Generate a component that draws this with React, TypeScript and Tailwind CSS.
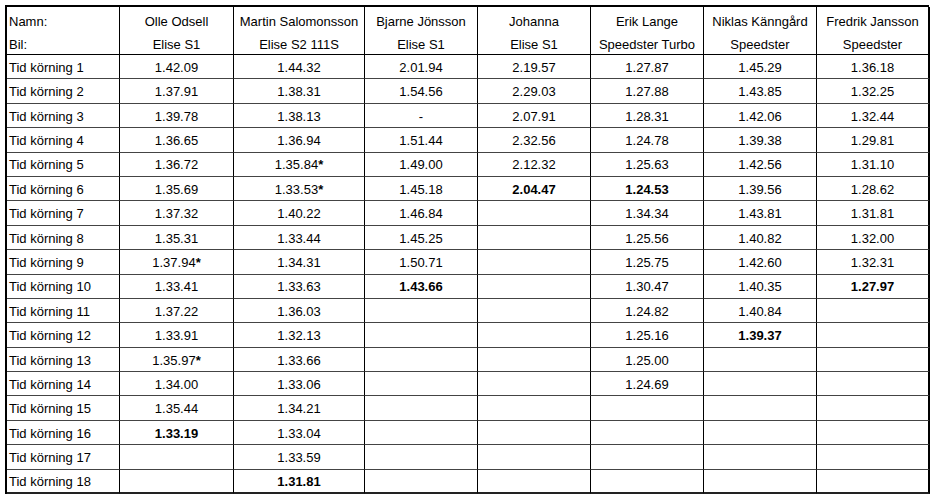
import React from "react";

type Cell = string | { v: string; bold?: boolean; star?: boolean };

interface Driver {
  name: string;
  car: string;
  times: Cell[];
}

const drivers: Driver[] = [
  {
    name: "Olle Odsell",
    car: "Elise S1",
    times: [
      "1.42.09", "1.37.91", "1.39.78", "1.36.65", "1.36.72", "1.35.69", "1.37.32", "1.35.31",
      { v: "1.37.94", star: true }, "1.33.41", "1.37.22", "1.33.91", { v: "1.35.97", star: true },
      "1.34.00", "1.35.44", { v: "1.33.19", bold: true },
    ],
  },
  {
    name: "Martin Salomonsson",
    car: "Elise S2 111S",
    times: [
      "1.44.32", "1.38.31", "1.38.13", "1.36.94", { v: "1.35.84", star: true }, { v: "1.33.53", star: true },
      "1.40.22", "1.33.44", "1.34.31", "1.33.63", "1.36.03", "1.32.13", "1.33.66", "1.33.06",
      "1.34.21", "1.33.04", "1.33.59", { v: "1.31.81", bold: true },
    ],
  },
  {
    name: "Bjarne Jönsson",
    car: "Elise S1",
    times: [
      "2.01.94", "1.54.56", "-", "1.51.44", "1.49.00", "1.45.18", "1.46.84", "1.45.25", "1.50.71",
      { v: "1.43.66", bold: true },
    ],
  },
  {
    name: "Johanna",
    car: "Elise S1",
    times: ["2.19.57", "2.29.03", "2.07.91", "2.32.56", "2.12.32", { v: "2.04.47", bold: true }],
  },
  {
    name: "Erik Lange",
    car: "Speedster Turbo",
    times: [
      "1.27.87", "1.27.88", "1.28.31", "1.24.78", "1.25.63", { v: "1.24.53", bold: true }, "1.34.34",
      "1.25.56", "1.25.75", "1.30.47", "1.24.82", "1.25.16", "1.25.00", "1.24.69",
    ],
  },
  {
    name: "Niklas Känngård",
    car: "Speedster",
    times: [
      "1.45.29", "1.43.85", "1.42.06", "1.39.38", "1.42.56", "1.39.56", "1.43.81", "1.40.82",
      "1.42.60", "1.40.35", "1.40.84", { v: "1.39.37", bold: true },
    ],
  },
  {
    name: "Fredrik Jansson",
    car: "Speedster",
    times: [
      "1.36.18", "1.32.25", "1.32.44", "1.29.81", "1.31.10", "1.28.62", "1.31.81", "1.32.00",
      "1.32.31", { v: "1.27.97", bold: true },
    ],
  },
];

const rows = Array.from({ length: 18 }, (_, i) => i);

const TimeCell = ({ cell }: { cell?: Cell }) => {
  if (!cell) return null;
  if (typeof cell === "string") return <span>{cell}</span>;
  return (
    <span className={cell.bold ? "font-bold" : ""}>
      {cell.v}
      {cell.star && <span className="font-bold">*</span>}
    </span>
  );
};

export default function App() {
  return (
    <div
      className="min-h-[497px] w-[934px] bg-white pl-[5px] pt-[5px] text-[13px] text-black"
      style={{ fontFamily: '"Liberation Sans", Arial, sans-serif' }}
    >
      <div className="grid w-[924px] grid-cols-[113px_114px_131px_113px_113px_113px_113px_113px] grid-rows-[48px_repeat(18,24.4px)] border-l-2 border-t-2 border-black">
        <div className="flex flex-col border-b border-r border-black pl-[2px]">
          <div className="flex h-[24px] items-end">Namn:</div>
          <div className="flex h-[23px] items-end">Bil:</div>
        </div>
        {drivers.map((d, i) => (
          <div
            key={d.name}
            className={`flex flex-col items-center border-b border-black ${
              i === drivers.length - 1 ? "border-r-2" : "border-r"
            }`}
          >
            <div className="flex h-[24px] items-end">{d.name}</div>
            <div className="flex h-[23px] items-end">{d.car}</div>
          </div>
        ))}
        {rows.map((r) => (
          <React.Fragment key={r}>
            <div
              className={`flex items-end border-r border-black pl-[2px] pb-[1px] ${
                r === 17 ? "border-b-2 border-b-[#222]" : "border-b border-b-[#444]"
              }`}
            >
              Tid körning {r + 1}
            </div>
            {drivers.map((d, i) => (
              <div
                key={d.name}
                className={`flex items-end justify-center border-black pb-[1px] ${
                  i === drivers.length - 1 ? "border-r-2" : "border-r"
                } ${r === 17 ? "border-b-2 border-b-[#222]" : "border-b border-b-[#444]"}`}
              >
                <TimeCell cell={d.times[r]} />
              </div>
            ))}
          </React.Fragment>
        ))}
      </div>
    </div>
  );
}
